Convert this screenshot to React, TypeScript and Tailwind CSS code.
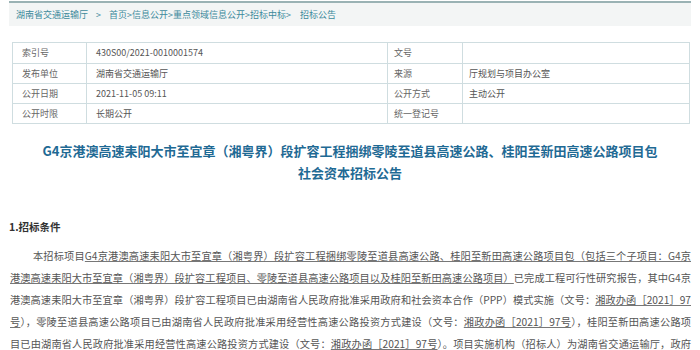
import React from 'react'

const font = { fontFamily: '"Noto Sans CJK SC", "Noto Sans", sans-serif' }

// 基本信息表格
const infoRows = [
  ['索引号', '430S00/2021-0010001574', '文号', ''],
  ['发布单位', '湖南省交通运输厅', '来源', '厅规划与项目办公室'],
  ['公开日期', '2021-11-05 09:11', '公开方式', '主动公开'],
  ['公开时限', '长期公开', '统一登记号', ''],
]

function U({ children }: { children: React.ReactNode }) {
  return <span className="underline decoration-[#777] underline-offset-[1px]">{children}</span>
}

function Line({ children, indent }: { children: React.ReactNode; indent?: boolean }) {
  return (
    <div className={`h-[22px] leading-[22px] text-justify [text-align-last:justify] ${indent ? 'pl-[23px]' : ''}`}>
      {children}
    </div>
  )
}

export default function App() {
  return (
    <div className="w-[700px] h-[350px] overflow-hidden bg-white" style={font}>
      {/* 面包屑 */}
      <div className="mx-[9px] mt-[1px] h-[25px] border-t-2 border-[#9ab2b4] bg-[#f3f5f5] flex items-center pl-[7px] text-[9px] text-[#3d8a9c]">
        <span>湖南省交通运输厅</span>
        <span className="mx-[8px]">&gt;</span>
        <span>首页&gt;信息公开&gt;重点领域信息公开&gt;招标中标&gt;</span>
        <span className="ml-[9px]">招标公告</span>
      </div>

      {/* 信息表 */}
      <div className="ml-[12px] mt-[16px] w-[678px] border border-[#cfdde0] text-[9px] text-[#666]">
        {infoRows.map((r, i) => (
          <div
            key={i}
            className={`grid grid-cols-[74px_301px_75px_1fr] h-[20px] items-stretch ${i > 0 ? 'border-t border-[#cfdde0]' : ''}`}
          >
            <div className="pl-[9px] flex items-center border-r border-[#cfdde0]">{r[0]}</div>
            <div className="pl-[9px] flex items-center border-r border-[#cfdde0] text-[#555]">{r[1]}</div>
            <div className="pl-[6px] flex items-center border-r border-[#cfdde0]">{r[2]}</div>
            <div className="pl-[6px] flex items-center text-[#555]">{r[3]}</div>
          </div>
        ))}
      </div>

      {/* 标题 */}
      <div className="mt-[16px] text-center text-[13px] font-bold leading-[22px] text-[#1f6a94]">
        <div>G4京港澳高速耒阳大市至宜章（湘粤界）段扩容工程捆绑零陵至道县高速公路、桂阳至新田高速公路项目包</div>
        <div>社会资本招标公告</div>
      </div>

      <div className="mt-[34px] pl-[9px] text-[10.5px] font-bold leading-[18px] text-[#333]">1.招标条件</div>

      {/* 正文 */}
      <div className="mt-[9px] ml-[10px] w-[681px] text-[10.2px] text-[#555]">
        <Line indent>
          本招标项目<U>G4京港澳高速耒阳大市至宜章（湘粤界）段扩容工程捆绑零陵至道县高速公路、桂阳至新田高速公路项目包（包括三个子项目：G4京</U>
        </Line>
        <Line>
          <U>港澳高速耒阳大市至宜章（湘粤界）段扩容工程项目、零陵至道县高速公路项目以及桂阳至新田高速公路项目）</U>已完成工程可行性研究报告，其中G4京
        </Line>
        <Line>
          港澳高速耒阳大市至宜章（湘粤界）段扩容工程项目已由湖南省人民政府批准采用政府和社会资本合作（PPP）模式实施（文号：<U>湘政办函［2021］97</U>
        </Line>
        <Line>
          <U>号</U>），零陵至道县高速公路项目已由湖南省人民政府批准采用经营性高速公路投资方式建设（文号：<U>湘政办函［2021］97号</U>），桂阳至新田高速公路项
        </Line>
        <Line>
          目已由湖南省人民政府批准采用经营性高速公路投资方式建设（文号：<U>湘政办函［2021］97号</U>）。项目实施机构（招标人）为湖南省交通运输厅，政府
        </Line>
      </div>
    </div>
  )
}
